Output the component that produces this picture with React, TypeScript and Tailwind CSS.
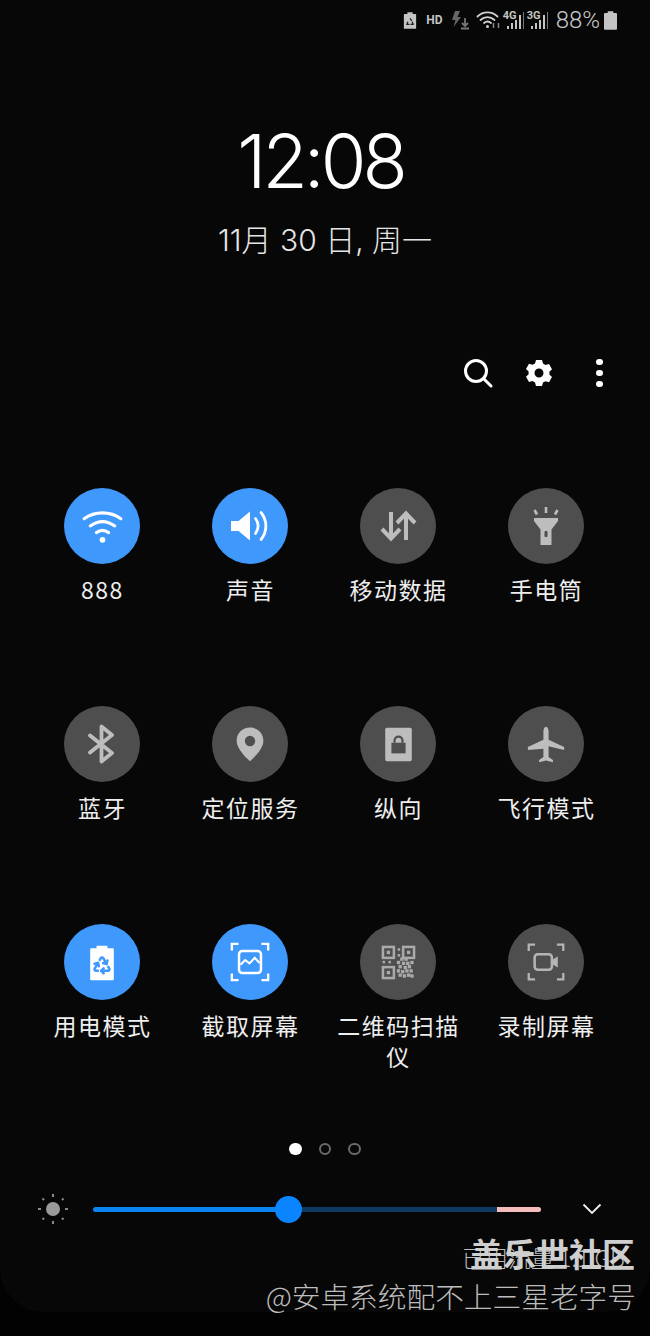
import type { ReactNode } from "react";
import { Recycle } from "lucide-react";

const CJK = "font-['Noto_Sans_CJK_SC','Noto_Sans',sans-serif]";

function Svg({ children, size = 44 }: { children: ReactNode; size?: number }) {
  return (
    <svg width={size} height={size} viewBox="0 0 44 44" fill="none">
      {children}
    </svg>
  );
}

function WifiIcon() {
  return (
    <Svg size={49}>
      <g stroke="#fff" strokeWidth="2.800" strokeLinecap="round">
        <path d="M5.500 15C15 8 29 8 38.500 15" />
        <path d="M11 21.500C18 16.500 26 16.500 33 21.500" />
        <path d="M16.500 27.500C20 25 24 25 27.500 27.500" />
      </g>
      <circle cx="22" cy="34" r="2.600" fill="#fff" />
    </Svg>
  );
}

function SoundIcon() {
  return (
    <Svg>
      <path d="M3 17h7.500L22 7.500v29L10.500 27H3z" fill="#fff" />
      <path d="M27.500 14.500c3.500 4.500 3.500 10.500 0 15" stroke="#fff" strokeWidth="2.800" strokeLinecap="round" />
      <path d="M33 8.500c6.500 8 6.500 19 0 27" stroke="#fff" strokeWidth="2.800" strokeLinecap="round" />
    </Svg>
  );
}

function DataIcon() {
  return (
    <Svg>
      <g stroke="#bdbdbd" strokeWidth="4" fill="none">
        <path d="M15 8v26" />
        <path d="M6 25l9 9.500 9-9.500" />
        <path d="M30 36V10" />
        <path d="M21 19l9-9.500 9 9.500" />
      </g>
    </Svg>
  );
}

function TorchIcon() {
  return (
    <Svg>
      <path d="M10 14h24v3l-6.500 8.500V41h-11V25.500L10 17z" fill="#bdbdbd" />
      <rect x="20.500" y="27" width="3" height="6" rx="1" fill="#4e4e4e" />
      <path d="M22 3v6M10.500 6l2.500 4.500M33.500 6l-2.500 4.500" stroke="#bdbdbd" strokeWidth="2.600" />
    </Svg>
  );
}

function BluetoothIcon() {
  return (
    <Svg>
      <path
        d="M10 13.500 32 31 21.500 39.500V4.500L32 13 10 30.500"
        stroke="#bdbdbd"
        strokeWidth="3.800"
        strokeLinejoin="round"
        strokeLinecap="round"
      />
    </Svg>
  );
}

function PinIcon() {
  return (
    <Svg size={38}>
      <path
        fillRule="evenodd"
        d="M22 3c8.800 0 15.500 6.600 15.500 15.200C37.500 27 28 36.500 22 42 16 36.500 6.500 27 6.500 18.200 6.500 9.600 13.200 3 22 3zm0 9.500a6 6 0 1 0 0 12 6 6 0 0 0 0-12z"
        fill="#bdbdbd"
      />
    </Svg>
  );
}

function PortraitLockIcon() {
  return (
    <Svg size={39}>
      <rect x="7" y="3" width="30" height="38" rx="2" fill="#bdbdbd" />
      <path d="M14 20h16v12H14z" fill="#4e4e4e" />
      <path d="M17.500 20v-2.500a4.500 4.500 0 0 1 9 0V20" stroke="#4e4e4e" strokeWidth="2.500" />
    </Svg>
  );
}

function PlaneIcon() {
  return (
    <Svg size={38}>
      <path
        d="M22 2c2 0 3 3 3 6v9l18 8.500v3.500l-18-4.500V37l5 3.500V43l-8-2-8 2v-2.500l5-3.500v-9.500L1 29v-3.500L19 17V8c0-3 1-6 3-6z"
        fill="#bdbdbd"
      />
    </Svg>
  );
}

function SaverIcon() {
  return (
    <div className="relative flex h-[40px] w-[40px] items-center justify-center">
      <Svg size={40}>
        <path d="M16 4h12v3h6a1 1 0 0 1 1 1v33a1 1 0 0 1-1 1H10a1 1 0 0 1-1-1V8a1 1 0 0 1 1-1h6z" fill="#fff" />
      </Svg>
      <Recycle className="absolute left-[10px] top-[13px]" size={20} color="#3f98fb" strokeWidth={3} />
    </div>
  );
}

function Corners({ color }: { color: string }) {
  return <path d="M3 10V3h7M34 3h7v7M3 34v7h7M34 41h7v-7" stroke={color} strokeWidth="2.500" />;
}

function ScreenshotIcon() {
  return (
    <Svg size={42}>
      <Corners color="#fff" />
      <rect x="10.500" y="10.500" width="23" height="23" rx="3.500" stroke="#fff" strokeWidth="2.600" />
      <path d="M12 25l5-5 4.500 3.500 5.500-6 5 5.500" stroke="#fff" strokeWidth="2.200" />
    </Svg>
  );
}

function RecordIcon() {
  return (
    <Svg size={40}>
      <Corners color="#b4b4b4" />
      <rect x="9.500" y="13.500" width="19" height="17" rx="3.500" stroke="#b4b4b4" strokeWidth="2.800" />
      <path d="M28 20l7-4v12l-7-4z" fill="#b4b4b4" />
    </Svg>
  );
}

function QrIcon() {
  const dots = [
    [26, 18], [31, 18], [22, 22], [28, 23], [33, 23], [38, 22], [24, 27], [30, 28], [35, 27],
    [22, 32], [27, 33], [32, 32], [37, 32], [24, 37], [29, 38], [34, 37], [38, 38],
  ];
  return (
    <Svg size={37}>
      <g stroke="#aaaaaa" strokeWidth="3">
        <rect x="3.500" y="3.500" width="13" height="13" />
        <rect x="27.500" y="3.500" width="13" height="13" />
        <rect x="3.500" y="27.500" width="13" height="13" />
      </g>
      <g fill="#aaaaaa">
        <rect x="8" y="8" width="4" height="4" />
        <rect x="32" y="8" width="4" height="4" />
        <rect x="8" y="32" width="4" height="4" />
        <rect x="21" y="5" width="3" height="3" />
        <rect x="21" y="12" width="3" height="3" />
        <rect x="3" y="20" width="3" height="3" />
        <rect x="10" y="20" width="3" height="3" />
        {dots.map(([x, y]) => (
          <rect key={`${x}-${y}`} x={x - 2} y={y - 2} width="4" height="4" />
        ))}
      </g>
    </Svg>
  );
}

const tiles: { label: string; on?: boolean; icon: ReactNode }[] = [
  { label: "888", on: true, icon: <WifiIcon /> },
  { label: "声音", on: true, icon: <SoundIcon /> },
  { label: "移动数据", icon: <DataIcon /> },
  { label: "手电筒", icon: <TorchIcon /> },
  { label: "蓝牙", icon: <BluetoothIcon /> },
  { label: "定位服务", icon: <PinIcon /> },
  { label: "纵向", icon: <PortraitLockIcon /> },
  { label: "飞行模式", icon: <PlaneIcon /> },
  { label: "用电模式", on: true, icon: <SaverIcon /> },
  { label: "截取屏幕", on: true, icon: <ScreenshotIcon /> },
  { label: "二维码扫描仪", icon: <QrIcon /> },
  { label: "录制屏幕", icon: <RecordIcon /> },
];

function Signal({ tag }: { tag: string }) {
  return (
    <div className="relative h-[20px] w-[22px]">
      <span className="absolute left-0 top-[0px] font-['Roboto',sans-serif] text-[11px] font-bold leading-[11px] text-[#c4c4c4]">
        {tag}
      </span>
      <svg className="absolute left-0 top-0" width="22" height="20" viewBox="0 0 22 20" fill="#c4c4c4">
        <rect x="4" y="16" width="2" height="3" />
        <rect x="8" y="13" width="2" height="6" />
        <rect x="12" y="10" width="2" height="9" />
        <rect x="16" y="5" width="2" height="14" />
        <rect x="20" y="2" width="1" height="17" fill="#777" />
      </svg>
    </div>
  );
}

function StatusBar() {
  return (
    <div className="flex h-[38px] items-center justify-end pr-[33px] pt-[2px]">
      <svg className="mr-[9px]" width="14" height="19" viewBox="0 0 16 21">
        <path d="M5 1h6v2h3a1 1 0 0 1 1 1v16H1V4a1 1 0 0 1 1-1h3z" fill="#c4c4c4" />
        <path d="M8 8l2 3M5.500 12l-1 3h3M10.500 12l1 3h-3" stroke="#222" strokeWidth="1.500" fill="none" />
      </svg>
      <span className="mr-[7px] font-['Roboto',sans-serif] text-[12px] font-bold text-[#c4c4c4]">HD</span>
      <svg className="mr-[6px]" width="20" height="20" viewBox="0 0 20 20">
        <path d="M5 1h5L7.500 7H11L3.500 17l2-7H2z" fill="#666" />
        <path d="M15 8v8M12 13l3 3 3-3M11 18.500h8" stroke="#777" strokeWidth="1.800" fill="none" />
      </svg>
      <svg className="mr-[2px]" width="25" height="20" viewBox="0 0 24 20" fill="none">
        <g stroke="#d0d0d0" strokeWidth="1.800" strokeLinecap="round">
          <path d="M1 6.500C6.500 1 15.500 1 21 6.500" />
          <path d="M4 10C8 6.200 14 6.200 18 10" />
          <path d="M7.500 13C9.800 11 12.200 11 14.500 13" />
        </g>
        <circle cx="11" cy="16.500" r="1.500" fill="#d0d0d0" />
        <path d="M17 13v5M22 18v-5" stroke="#888" strokeWidth="1.500" />
      </svg>
      <Signal tag="4G" />
      <div className="w-[2px]" />
      <Signal tag="3G" />
      <span className="ml-[7px] font-['Roboto',sans-serif] text-[24px] font-light leading-none text-[#c8c8c8]">88%</span>
      <svg className="ml-[4px]" width="13" height="19" viewBox="0 0 14 20">
        <path d="M4 0h6v2h3a1 1 0 0 1 1 1v16a1 1 0 0 1-1 1H1a1 1 0 0 1-1-1V3a1 1 0 0 1 1-1h3z" fill="#c4c4c4" />
      </svg>
    </div>
  );
}

function Clock() {
  return (
    <div className="flex flex-col items-center">
      <div className="mt-[78px] h-[90px] pr-[9px] font-['Inter',sans-serif] text-[74px] font-light leading-[90px] tracking-[-4px] text-white">
        12:08
      </div>
      <div className="mt-[11px] h-[46px] font-['Inter','Noto_Sans_CJK_SC',sans-serif] text-[30px] font-light leading-[46px] text-[#e6e6e6]">
        11月 30 日, 周一
      </div>
    </div>
  );
}

function Toolbar() {
  return (
    <div className="mt-[90px] flex h-[40px] items-center justify-end pr-[20px]">
      <div className="flex w-[61px] justify-center">
        <svg width="30" height="30" viewBox="0 0 30 30" fill="none" stroke="#fff" strokeLinecap="round">
          <circle cx="13" cy="13" r="10.500" strokeWidth="3" />
          <path d="M21 21l7 7" strokeWidth="3" />
        </svg>
      </div>
      <div className="flex w-[61px] justify-center">
        <svg width="28" height="28" viewBox="0 0 28 28">
          <path
            fillRule="evenodd"
            fill="#fff"
            d="M11 1h6l1 3.500 2.500 1.400 3.500-.9 3 5.200-2.600 2.500v2.800l2.600 2.500-3 5.200-3.500-.9L18 23.500 17 27h-6l-1-3.500-2.500-1.400-3.500.9-3-5.200 2.600-2.500v-2.800L1 10l3-5.200 3.500.9L10 4.500zM14 9.500a4.500 4.500 0 1 0 0 9 4.500 4.500 0 0 0 0-9z"
          />
        </svg>
      </div>
      <div className="flex w-[61px] flex-col items-center gap-[4.500px]">
        <span className="h-[6.500px] w-[6.500px] rounded-full bg-white" />
        <span className="h-[6.500px] w-[6.500px] rounded-full bg-white" />
        <span className="h-[6.500px] w-[6.500px] rounded-full bg-white" />
      </div>
    </div>
  );
}

function Tile({ label, on, icon }: { label: string; on?: boolean; icon: ReactNode }) {
  return (
    <div className="flex h-[218px] flex-col items-center">
      <div
        className={`flex h-[76px] w-[76px] items-center justify-center rounded-full ${on ? "bg-[#3f98fb]" : "bg-[#4e4e4e]"}`}
      >
        {icon}
      </div>
      <div
        className={`mt-[10px] w-[126px] break-all pl-[1px] text-center ${CJK} text-[23px] font-normal leading-[31px] tracking-[1.500px] text-[#eeeeee]`}
      >
        {label}
      </div>
    </div>
  );
}

function Pager() {
  return (
    <div className="flex h-[14px] items-center justify-center gap-[17px]">
      <span className="h-[12.500px] w-[12.500px] rounded-full bg-white" />
      <span className="h-[12.500px] w-[12.500px] rounded-full border-2 border-[#6a6a6a]" />
      <span className="h-[12.500px] w-[12.500px] rounded-full border-2 border-[#6a6a6a]" />
    </div>
  );
}

function Brightness() {
  return (
    <div className="mt-[33px] flex h-[40px] items-center pl-[37px]">
      <svg width="32" height="32" viewBox="0 0 32 32">
        <circle cx="16" cy="16" r="7" fill="#9a9a9a" />
        <g stroke="#8a8a8a" strokeWidth="2">
          <path d="M16 1v3M16 28v3M1 16h3M28 16h3M5.500 5.500l1.500 1.500M25 25l1.500 1.500M5.500 26.500L7 25M25 7l1.500-1.500" />
        </g>
      </svg>
      <div className="relative ml-[24px] flex h-[5px] w-[448px] overflow-visible rounded-full">
        <div className="h-full w-[196px] rounded-l-full bg-[#0a84f0]" />
        <div className="h-full w-[208px] bg-[#0c3a62]" />
        <div className="h-full w-[44px] rounded-r-full bg-[#f5bcbc]" />
        <div className="absolute left-[182px] top-[-11px] h-[27px] w-[27px] rounded-full bg-[#0a84ff]" />
      </div>
      <svg className="ml-[41px]" width="20" height="12" viewBox="0 0 20 12" fill="none">
        <path d="M1.500 1.500L10 10l8.500-8.500" stroke="#f0f0f0" strokeWidth="1.800" />
      </svg>
    </div>
  );
}

export default function App() {
  return (
    <div className="relative h-[1336px] w-[650px] overflow-hidden bg-[#020202]">
      <div className="h-[1312px] rounded-b-[44px] bg-[#070707]">
        <StatusBar />
        <Clock />
        <Toolbar />
        <div className="mt-[95px] grid grid-cols-[repeat(4,148px)] pl-[28px]">
          {tiles.map((t) => (
            <Tile key={t.label} label={t.label} on={t.on} icon={t.icon} />
          ))}
        </div>
        <Pager />
        <Brightness />
      </div>

      {/* watermark sits on top of the data usage line */}
      <div className={`absolute left-[462px] top-[1241px] ${CJK} text-[23px] font-light leading-[32px] text-[#bdbdbd]`}>
        已用流量 1.1 GB
      </div>
      <div className={`absolute right-[15px] top-[1230px] ${CJK} text-[33px] font-bold leading-[46px] text-[#cfcfcf]`}>
        盖乐世社区
      </div>
      <div className={`absolute right-[14px] top-[1276px] ${CJK} text-[28.700px] font-light leading-[40px] text-[#bcbcbc]`}>
        @安卓系统配不上三星老字号
      </div>
    </div>
  );
}
